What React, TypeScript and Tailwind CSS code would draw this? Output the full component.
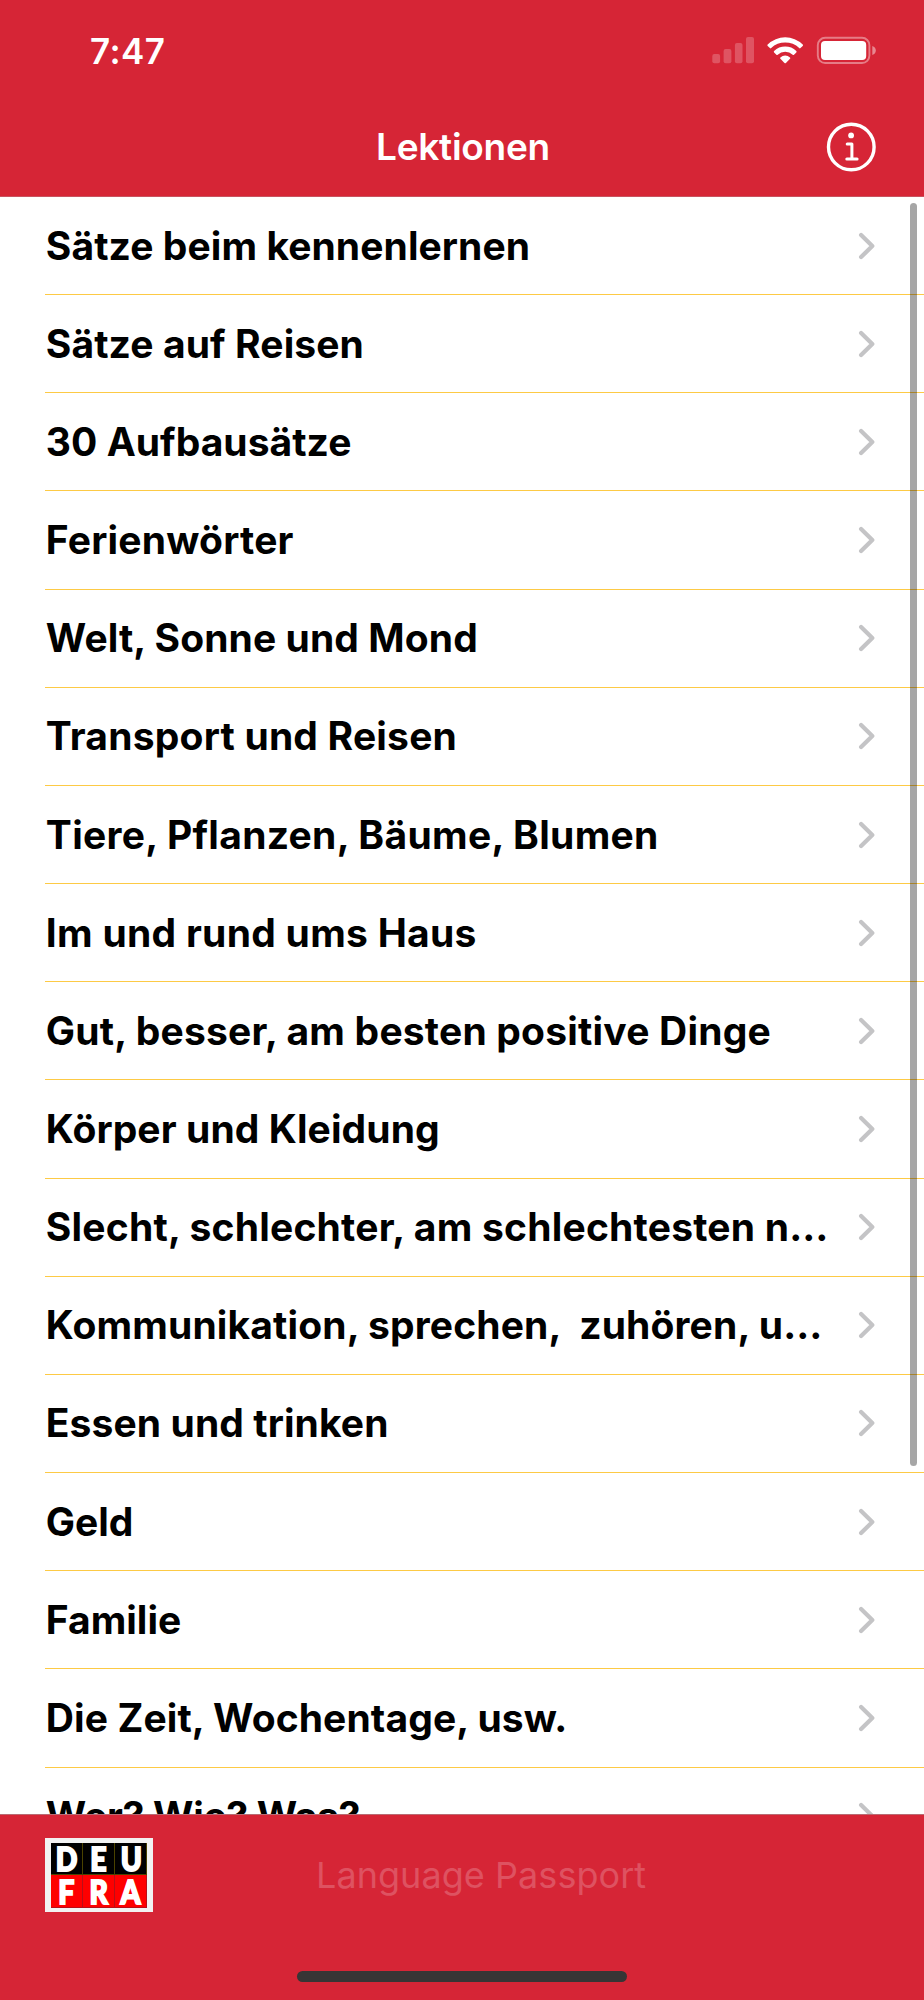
import clsx from 'clsx';

type Lesson = {
  title: string;
  tracking: string;
};

const lessons: Lesson[] = [
  { title: 'Sätze beim kennenlernen', tracking: 'tracking-[0.08px]' },
  { title: 'Sätze auf Reisen', tracking: 'tracking-[0.11px]' },
  { title: '30 Aufbausätze', tracking: 'tracking-[0.04px]' },
  { title: 'Ferienwörter', tracking: 'tracking-[0.2px]' },
  { title: 'Welt, Sonne und Mond', tracking: 'tracking-[0.09px]' },
  { title: 'Transport und Reisen', tracking: 'tracking-[0.2px]' },
  { title: 'Tiere, Pflanzen, Bäume, Blumen', tracking: 'tracking-[0.3px]' },
  { title: 'Im und rund ums Haus', tracking: 'tracking-[0.28px]' },
  { title: 'Gut, besser, am besten positive Dinge', tracking: 'tracking-[0.2px]' },
  { title: 'Körper und Kleidung', tracking: 'tracking-[0.1px]' },
  { title: 'Slecht, schlechter, am schlechtesten n…', tracking: 'tracking-[0.22px]' },
  { title: 'Kommunikation, sprechen,  zuhören, u…', tracking: 'tracking-[0.14px]' },
  { title: 'Essen und trinken', tracking: 'tracking-[0.1px]' },
  { title: 'Geld', tracking: 'tracking-normal' },
  { title: 'Familie', tracking: 'tracking-normal' },
  { title: 'Die Zeit, Wochentage, usw.', tracking: 'tracking-[0.1px]' },
  { title: 'Wer? Wie? Was?', tracking: 'tracking-[-0.3px]' },
];

function StatusIcons() {
  return (
    <svg width="166" height="30" viewBox="0 0 166 30" fill="none" className="-mt-px">
      {/* Signal */}
      <g fill="#fff" fillOpacity="0.22">
        <rect x="2.3" y="19" width="7.8" height="9.3" rx="2" />
        <rect x="13.6" y="14" width="7.8" height="14.3" rx="2" />
        <rect x="24.9" y="8" width="7.6" height="20.3" rx="2" />
        <rect x="36" y="2" width="8" height="26.3" rx="2" />
      </g>
      {/* Wifi */}
      <g fill="#fff">
        <path d="M57.7 9.5a25 25 0 0 1 35 0q.7.7 0 1.4l-2.2 2.2q-.6.6-1.3 0a20 20 0 0 0-28 0q-.7.6-1.3 0l-2.2-2.2q-.7-.7 0-1.4z" />
        <path d="M64.1 16a16 16 0 0 1 22.2 0q.7.7 0 1.4l-2.3 2.3q-.6.6-1.3 0a11 11 0 0 0-15 0q-.7.6-1.3 0l-2.3-2.3q-.7-.7 0-1.4z" />
        <path d="M70.4 22.4a7.3 7.3 0 0 1 9.6 0q.7.7 0 1.4l-4.1 4.1q-.7.6-1.4 0l-4.1-4.1q-.7-.7 0-1.4z" />
      </g>
      {/* Battery */}
      <rect x="107.8" y="2.8" width="51.6" height="25.2" rx="7.4" stroke="#fff" strokeOpacity="0.4" strokeWidth="1.9" />
      <rect x="111" y="6" width="45.2" height="19" rx="4" fill="#fff" />
      <path d="M162.3 11v9q3.5-1.3 3.5-4.5t-3.5-4.5z" fill="#fff" fillOpacity="0.45" />
    </svg>
  );
}

function InfoIcon() {
  return (
    <svg width="50" height="50" viewBox="0 0 50 50" fill="none" stroke="#fff" strokeLinecap="round" strokeLinejoin="round">
      <circle cx="25.3" cy="25" r="22.8" strokeWidth="3.4" />
      <circle cx="25.1" cy="13.4" r="2.9" fill="#fff" stroke="none" />
      <path d="M21.2 22h4.7v14.8M20.8 36.9h10.3" strokeWidth="3" />
    </svg>
  );
}

function LessonRow({ title, tracking }: Lesson) {
  return (
    <li className="ml-[45px] flex h-[98.16px] shrink-0 items-center justify-between border-b border-[#fdca45] pr-[48px] pl-[0.8px]">
      <span className={clsx('whitespace-pre text-[39px] leading-[48px] font-bold text-black', tracking)}>
        {title}
      </span>
      <svg width="18" height="28" viewBox="0 0 18 28" fill="none" className="shrink-0">
        <path d="M3.1 2.9 14.3 14 3.1 25.1" stroke="#c4c4c6" strokeWidth="4.2" strokeLinecap="round" strokeLinejoin="round" />
      </svg>
    </li>
  );
}

function LanguageBadge() {
  return (
    <div className="h-[74px] w-[108px] bg-[#f2f2f2] px-[5.5px] py-[4.5px]">
      <div className="grid h-[65px] grid-cols-3 grid-rows-2 font-['Lato'] text-[33px] leading-[30px] font-black text-white [-webkit-text-stroke:2px_white]">
        {['D', 'E', 'U', 'F', 'R', 'A'].map((letter, i) => (
          <div
            key={letter}
            className={clsx(
              'flex items-center justify-center border-r border-b',
              i < 3 ? 'border-[#4a4200] bg-black' : 'border-[#b80f18] bg-[#fe0000]',
            )}
          >
            <span className="scale-x-[0.86]">{letter}</span>
          </div>
        ))}
      </div>
    </div>
  );
}

export default function App() {
  return (
    <div className="relative flex h-[2000px] w-[924px] flex-col overflow-hidden bg-white font-['Inter',sans-serif]">
      <header className="flex h-[197px] shrink-0 flex-col border-b border-[#c8535f] bg-[#d62536] text-white">
        <div className="flex h-[98px] items-center justify-between pt-[3px] pr-[48px] pl-[90px]">
          <span className="text-[35px] leading-[40px] font-semibold tracking-[0.4px]">7:47</span>
          <StatusIcons />
        </div>
        <div className="grid h-[98px] grid-cols-[1fr_auto_1fr] items-center pr-[48px] pl-[48px]">
          <h1 className="col-start-2 pl-[2px] text-[37px] leading-[44px] font-semibold tracking-[-0.25px]">Lektionen</h1>
          <button className="justify-self-end" aria-label="Info">
            <InfoIcon />
          </button>
        </div>
      </header>

      <ul className="flex h-[1617px] shrink-0 flex-col overflow-hidden">
        {lessons.map((lesson) => (
          <LessonRow key={lesson.title} {...lesson} />
        ))}
      </ul>
      {/* Scroll indicator */}
      <div className="absolute top-[203px] right-[7px] h-[1263px] w-[7px] rounded-full bg-black/35" />

      <footer className="flex flex-1 flex-col items-center border-t border-[#b96a72] bg-[#d62536]">
        <div className="flex h-[120px] w-full pt-[23px] pl-[45px]">
          <LanguageBadge />
          <span className="mt-[15px] ml-[163px] text-[36px] leading-[44px] tracking-[0.05px] text-[#de5261]">
            Language Passport
          </span>
        </div>
        <div className="mt-[36px] h-[11px] w-[330px] rounded-full bg-[#373535]" />
      </footer>
    </div>
  );
}
